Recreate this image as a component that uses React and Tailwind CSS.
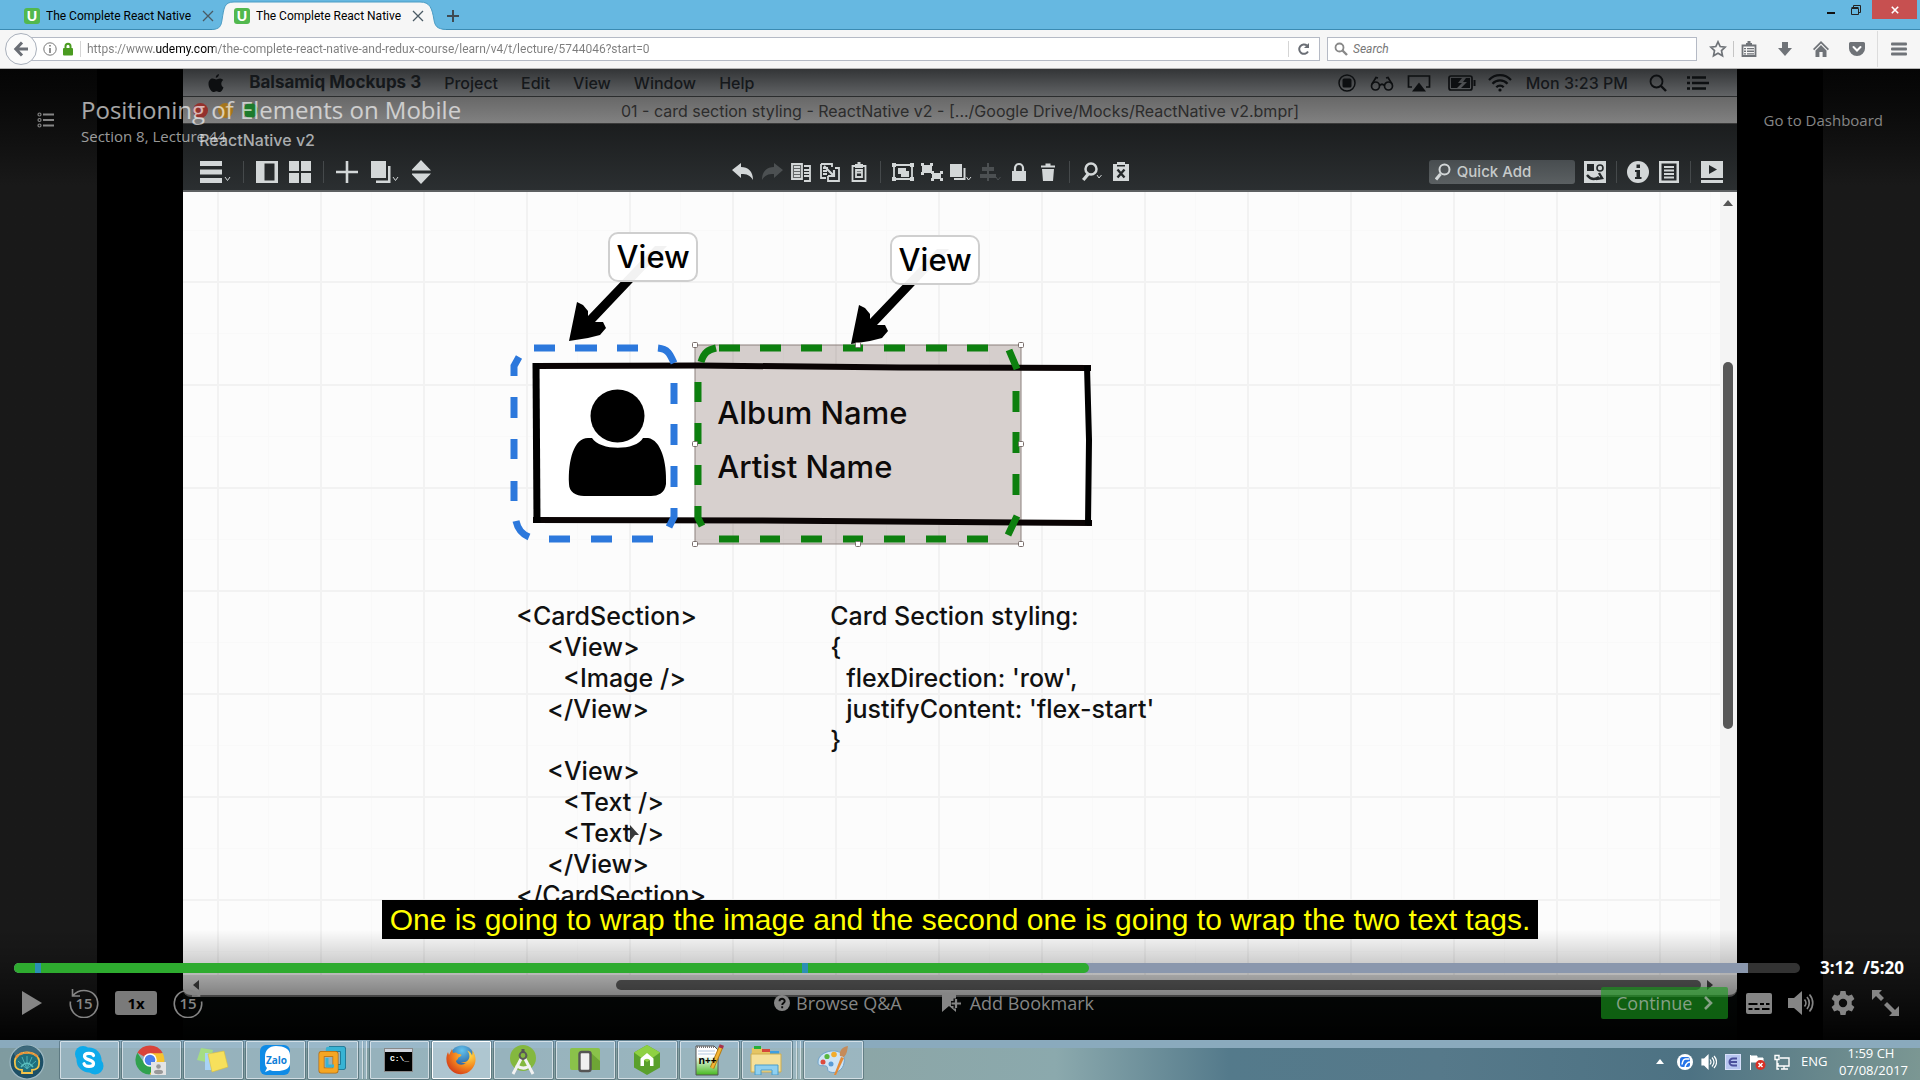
import React from "react";

const UI = "font-['Open_Sans','Noto_Sans',sans-serif]";
const CHROME_UI = "font-['Roboto','Noto_Sans',sans-serif]";

/* ---------- browser chrome ---------- */

function Favicon() {
  return (
    <span className="flex h-4 w-4 shrink-0 items-center justify-center rounded-[3px] bg-[#52b84e] font-['Lato',sans-serif] text-[14px] leading-4 font-black text-white">
      U
    </span>
  );
}

function CloseX() {
  return (
    <svg viewBox="0 0 12 12" className="h-3 w-3" fill="none" stroke="#4a5a64" strokeWidth="1.3">
      <path d="M1 1l10 10M11 1L1 11" />
    </svg>
  );
}

function TabStrip() {
  return (
    <div className={`flex h-[30px] shrink-0 items-stretch border-b border-[#3b8bb3] bg-[#66b8e1] ${CHROME_UI} text-[12px] text-black`}>
      <div className="flex w-[222px] items-center pt-[2px] pl-6">
        <Favicon />
        <span className="ml-[6px] w-[150px] overflow-hidden whitespace-nowrap">The Complete React Native</span>
        <button aria-label="Close tab" className="ml-[6px]">
          <CloseX />
        </button>
      </div>
      <div className="relative -mb-px w-[220px]">
        <svg viewBox="0 0 234 30" className="absolute top-0 -left-[10px] h-[30px] w-[234px]">
          <path d="M0 30C8 29 9 26 10 20C12 8 12 2 22 2H208C218 2 220 8 222 20C223 26 225 29 234 30Z" fill="#f6f6f6" />
          <path d="M0 29.500C8 29 9 26 10 20C12 8 12 2 22 2H208C218 2 220 8 222 20C223 26 225 29 234 29.500" fill="none" stroke="#4b9cc4" />
        </svg>
        <div className="relative flex h-full items-center pt-[2px] pl-3">
          <Favicon />
          <span className="ml-[6px] w-[150px] overflow-hidden whitespace-nowrap">The Complete React Native</span>
          <button aria-label="Close tab" className="ml-[6px]">
            <CloseX />
          </button>
        </div>
      </div>
      <button aria-label="New tab" className="ml-[3px] flex w-4 items-center justify-center pt-[2px]">
        <svg viewBox="0 0 12 12" className="h-3 w-3" stroke="#3f4b52" strokeWidth="2">
          <path d="M6 0v12M0 6h12" />
        </svg>
      </button>
      <div className="ml-auto flex items-start pr-[3px]">
        <button aria-label="Minimize" className="flex h-[19px] w-[26px] items-center justify-center">
          <svg viewBox="0 0 12 12" className="h-3 w-3"><path d="M1 8h8v2H1z" fill="#111" /></svg>
        </button>
        <button aria-label="Restore" className="flex h-[19px] w-[27px] items-center justify-start pl-[5px]">
          <svg viewBox="0 0 12 12" className="h-3 w-3" fill="none" stroke="#222">
            <path d="M1.500 4.500h7v6h-7zM1.500 3.500h7M3.500 3v-1.500h7v7h-2" />
          </svg>
        </button>
        <button aria-label="Close" className="flex h-[19px] w-[45px] items-center justify-center bg-[#c75050]">
          <svg viewBox="0 0 10 10" className="h-2 w-2" stroke="#fff" strokeWidth="2">
            <path d="M1 1l8 8M9 1L1 9" />
          </svg>
        </button>
      </div>
    </div>
  );
}

function NavBar() {
  return (
    <div className={`flex h-[39px] shrink-0 items-center border-b border-[#b5b5b5] bg-[#f6f6f6] pr-[13px] pl-[5px] ${CHROME_UI} text-[12px] text-[#75797e]`}>
      <button aria-label="Back" className="relative z-10 flex h-8 w-8 shrink-0 items-center justify-center rounded-full border border-[#a9b0bb] bg-[#fbfbfb]">
        <svg viewBox="0 0 16 16" className="h-4 w-4" fill="none" stroke="#6a6e75" strokeWidth="3">
          <path d="M9 1.500L2.800 8L9 14.500M3 8h12" />
        </svg>
      </button>
      <div className="-ml-2 flex h-6 flex-1 items-center border border-[#b5bac5] bg-white pr-2 pl-[13px]">
        <svg viewBox="0 0 14 14" className="h-[14px] w-[14px] shrink-0" fill="none" stroke="#777">
          <circle cx="7" cy="7" r="6.200" />
          <path d="M7 6v5M7 3v1.600" strokeWidth="1.600" />
        </svg>
        <svg viewBox="0 0 12 14" className="ml-[5px] h-[14px] w-3 shrink-0">
          <path d="M3.500 7V4.200a2.500 2.500 0 0 1 5 0V7" fill="none" stroke="#4a9b20" strokeWidth="2" />
          <rect x="1" y="6" width="10" height="7.500" rx="1" fill="#4a9b20" />
        </svg>
        <span className="ml-[6px] h-4 w-px bg-[#d5d5d5]" />
        <input
          aria-label="Address"
          defaultValue="https://www.udemy.com/the-complete-react-native-and-redux-course/learn/v4/t/lecture/5744046?start=0"
          className="ml-[6px] min-w-0 flex-1 bg-[linear-gradient(90deg,#7d7d7d_67px,#000_67px,#000_128px,#7d7d7d_128px)] bg-clip-text text-transparent outline-none"
        />
        <span className="mr-2 h-4 w-px bg-[#d5d5d5]" />
        <button aria-label="Reload">
          <svg viewBox="0 0 14 14" className="h-[14px] w-[14px]" fill="none" stroke="#6a6e75" strokeWidth="2">
            <path d="M11 9.500A4.700 4.700 0 1 1 10 3.600" />
            <path d="M12 1v5H7z" fill="#6a6e75" stroke="none" />
          </svg>
        </button>
      </div>
      <label className="ml-[7px] flex h-6 w-[370px] items-center border border-[#b5bac5] bg-white pl-[6px]">
        <svg viewBox="0 0 14 14" className="h-[14px] w-[14px] shrink-0" fill="none" stroke="#888" strokeWidth="1.800">
          <circle cx="5.500" cy="5.500" r="4" />
          <path d="M8.500 8.500l4.500 4.500" strokeWidth="2.400" />
        </svg>
        <input aria-label="Search" placeholder="Search" className="ml-[5px] min-w-0 flex-1 italic outline-none placeholder:text-[#777]" />
      </label>
      <div className="ml-3 flex items-center text-[#6f7378]">
        <button aria-label="Bookmark" className="w-[18px]">
          <svg viewBox="0 0 18 18" className="h-[18px] w-[18px]" fill="none" stroke="currentColor" strokeWidth="1.700">
            <path d="M9 1.800l2.200 4.700 5 .6-3.700 3.500 1 5.200L9 13.200l-4.500 2.600 1-5.200L1.800 7.100l5-.6z" />
          </svg>
        </button>
        <span className="mx-[6px] h-4 w-px bg-[#c5c5c5]" />
        <button aria-label="Library" className="ml-px w-4">
          <svg viewBox="0 0 16 16" className="h-4 w-4">
            <path d="M1.500 4.500h13v10.500h-13z" fill="none" stroke="currentColor" strokeWidth="1.800" />
            <path d="M5 4V2h1.500V0h3v2H11v2zM3 7h2v1.300H3zM6 7h7v1.300H6zM3 9.600h2V11H3zM6 9.600h7V11H6zM3 12.200h2v1.200H3zM6 12.200h7v1.200H6z" fill="currentColor" />
          </svg>
        </button>
        <button aria-label="Downloads" className="ml-5 w-4">
          <svg viewBox="0 0 16 16" className="h-4 w-4" fill="currentColor"><path d="M5 1h6v6h4l-7 8-7-8h4z" /></svg>
        </button>
        <button aria-label="Home" className="ml-5 w-4">
          <svg viewBox="0 0 16 16" className="h-4 w-4" fill="currentColor">
            <path d="M8 0l8 8-1.200 1.200L8 2.500 1.200 9.200 0 8z" />
            <path d="M8 4l5.500 5.500V16H9.600v-5H6.400v5H2.500V9.500z" />
          </svg>
        </button>
        <button aria-label="Pocket" className="ml-5 w-4">
          <svg viewBox="0 0 16 16" className="h-4 w-4">
            <path d="M1.500 1h13A1.500 1.500 0 0 1 16 2.500V7.500a8 7.500 0 0 1-16 0V2.500A1.500 1.500 0 0 1 1.500 1z" fill="currentColor" />
            <path d="M4.500 6L8 9.500 11.500 6" fill="none" stroke="#fff" strokeWidth="2" strokeLinecap="round" />
          </svg>
        </button>
        <span className="ml-3 h-9 w-px bg-[#dcdcdc]" />
        <button aria-label="Menu" className="ml-[13px] w-4">
          <svg viewBox="0 0 16 16" className="h-4 w-4" fill="currentColor">
            <rect y="1.500" width="16" height="3" rx="1" /><rect y="6.500" width="16" height="3" rx="1" /><rect y="11.500" width="16" height="3" rx="1" />
          </svg>
        </button>
      </div>
    </div>
  );
}

/* ---------- Mac desktop inside the video ---------- */

function MacMenuBar() {
  return (
    <div className="flex h-7 shrink-0 items-center border-b border-[#2b2d2e] bg-linear-to-b from-[#333537] to-[#626466] pr-7 pl-[25px] text-[16px] leading-none font-medium text-[#15181b]">
      <svg viewBox="0 0 16 18" className="h-[18px] w-4" fill="#0d0f11">
        <path d="M11 0c.1 2-1.400 3.700-3.200 3.700C7.600 2 9.200.2 11 0zM15.500 13.500c-1 2.600-2.300 4.500-3.800 4.500-1.300 0-1.700-.8-3.200-.8s-2 .8-3.200.8C3.200 18 .5 13.600.5 9.800c0-3.300 2-5.300 4.200-5.300 1.500 0 2.600.9 3.600.9s2.200-1 4-.9c1.200.1 2.300.6 3 1.600-2.900 1.800-2.400 6 .2 7.400z" />
      </svg>
      <nav className="ml-[25px] flex items-center gap-[23px]">
        <span className="text-[17px] font-bold">Balsamiq Mockups 3</span>
        <span>Project</span>
        <span>Edit</span>
        <span>View</span>
        <span>Window</span>
        <span>Help</span>
      </nav>
      <div className="ml-auto flex items-center">
        <svg viewBox="0 0 18 18" className="w-[18px]"><circle cx="9" cy="9" r="8" fill="none" stroke="#0d0f11" strokeWidth="1.500" /><rect x="4.500" y="4.500" width="9" height="9" rx="1.500" fill="#0d0f11" /></svg>
        <svg viewBox="0 0 24 16" className="ml-[14px] w-6" fill="none" stroke="#0d0f11" strokeWidth="1.700">
          <circle cx="5.500" cy="11" r="4" /><circle cx="18.500" cy="11" r="4" /><path d="M9.500 10.500c1.500-1.500 3.500-1.500 5 0M2 9L6 2.500 8 3M22 9l-4-6.500-2 .5" />
        </svg>
        <svg viewBox="0 0 24 18" className="ml-[13px] w-6" fill="none" stroke="#0d0f11" strokeWidth="1.700"><path d="M5 13H1.500V2h21v11H19" /><path d="M12 8.500l7 9H5z" fill="#0d0f11" stroke="none" /></svg>
        <svg viewBox="0 0 28 16" className="ml-[17px] w-7" fill="none" stroke="#0d0f11" strokeWidth="1.700">
          <rect x="1" y="1" width="23" height="14" rx="2" /><path d="M26.500 5v6" strokeWidth="2" /><path d="M3 3h11l-4 5h4l-5 5H3zM22 13h-9l6-6h-4l3-4h4z" fill="#0d0f11" stroke="none" />
        </svg>
        <svg viewBox="0 0 24 18" className="ml-3 w-6" fill="none" stroke="#0d0f11" strokeWidth="2.200"><path d="M1 6a15 15 0 0 1 22 0M4.500 9.800a10 10 0 0 1 15 0M8.300 13.300a5 5 0 0 1 7.400 0" /><circle cx="12" cy="16" r="1.600" fill="#0d0f11" stroke="none" /></svg>
        <span className="ml-[14px]">Mon 3:23 PM</span>
        <svg viewBox="0 0 18 18" className="ml-[21px] w-[18px]" fill="none" stroke="#0d0f11" strokeWidth="1.800"><circle cx="7.500" cy="7.500" r="6" /><path d="M12 12l5 5" strokeWidth="2.400" /></svg>
        <svg viewBox="0 0 22 16" className="ml-5 w-[22px]" stroke="#0d0f11" strokeWidth="2.400"><path d="M5 2.500h14M5 8h17M5 13.500h14M0 2.500h3M0 8h3M0 13.500h3" /></svg>
      </div>
    </div>
  );
}

function WindowTitle() {
  return (
    <div className="relative flex h-[27px] shrink-0 items-center justify-center border-b border-[#3a3a3a] bg-linear-to-b from-[#686868] to-[#818181] pt-px text-[16px] text-[#2c2c2c]">
      <div className="absolute left-[10px] flex gap-[10px]">
        <span className="h-[15px] w-[15px] rounded-full bg-[#93312d]" />
        <span className="h-[15px] w-[15px] rounded-full bg-[#a5761d]" />
        <span className="h-[15px] w-[15px] rounded-full bg-[#1e7a2c]" />
      </div>
      <span>01 - card section styling - ReactNative v2 - [.../Google Drive/Mocks/ReactNative v2.bmpr]</span>
    </div>
  );
}

function Tool({ label, children, wide, dim }) {
  return (
    <button aria-label={label} className={`${wide ? "w-8" : "w-[22px]"} ${dim ? "text-[#4c5052]" : "text-[#d3d7d8]"} shrink-0`}>
      <svg viewBox={wide ? "0 0 32 24" : "0 0 22 24"} className={wide ? "h-6 w-8" : "h-6 w-[22px]"} fill="currentColor">
        {children}
      </svg>
    </button>
  );
}

function Divider({ wide }) {
  return (
    <span className={`flex h-[22px] shrink-0 justify-center ${wide ? "w-2" : "w-[3px]"}`}>
      <span className="w-px bg-[#45494b]" />
    </span>
  );
}

function Toolbar() {
  const line = { fill: "none", stroke: "currentColor" };
  return (
    <div className="flex h-[68px] shrink-0 flex-col border-b-2 border-[#5d6062] bg-linear-to-b from-[#1b1d1e] to-[#2b2f31] pr-[14px] pl-4">
      <div className="mt-1 h-6 text-[16px] leading-6 font-medium text-[#a9acae]">ReactNative v2</div>
      <div className="mt-2 flex items-center justify-between">
        <div className="flex items-center gap-[11px]">
          <Tool label="Menu" wide>
            <path d="M1 1h22v5H1zM1 9.500h22v5H1zM1 18h22v5H1z" />
            <path d="M26 17l2.500 3.500L31 17" {...line} />
          </Tool>
          <Divider />
          <Tool label="Panels"><path d="M0 1h22v22H0zM8.500 3.500v17h10v-17z" fillRule="evenodd" /></Tool>
          <Tool label="Thumbnails"><path d="M0 1h10v10H0zM12 1h10v10H12zM0 13h10v10H0zM12 13h10v10H12z" /></Tool>
          <Divider />
          <Tool label="Add"><path d="M9.700 1h2.600v22H9.700zM0 10.700h22v2.600H0z" /></Tool>
          <Tool label="Duplicate" wide>
            <path d="M2 1h15v17H2z" /><path d="M19 6h2.500v17H7v-2.500h12z" /><path d="M24 17l2.500 3.500L29 17" {...line} />
          </Tool>
          <Tool label="Order"><path d="M9 0l10 10.500H-1zM-1 13.500h20L9 24z" /></Tool>
        </div>
        <div className="flex items-center gap-[7px]">
          <Tool label="Undo"><path d="M0 10l9-7v4c7 0 12 4 12 13-3-5-6-6-12-6v4z" /></Tool>
          <Tool label="Redo" dim><path d="M22 10l-9-7v4C6 7 1 11 1 20c3-5 6-6 12-6v4z" /></Tool>
          <Tool label="Copy"><path d="M1 3h11v17H1z" opacity=".35" /><g {...line} strokeWidth="1.800"><path d="M2 4h10v15H2zM14 6h6v15h-6M4 7h6M4 10h6M4 13h6M4 16h6M14 10h6M14 13h6M14 16h6" /></g></Tool>
          <Tool label="Paste"><g {...line} strokeWidth="1.800"><path d="M2 4h11v3M2 4v14h5M4 8h5M4 11h4M4 14h4" /><path d="M16 8h4v13H9v-5" /><path d="M5 6l10 10M15 10v6H9" strokeWidth="2.200" /></g></Tool>
          <Tool label="Clipboard"><g {...line} strokeWidth="1.800"><path d="M4.500 6h13v15h-13zM8 10h6v7H8zM8 12.500h6" /></g><path d="M7 4h2.500V2h3v2H15v4H7z" /></Tool>
          <Divider wide />
          <Tool label="Group"><g {...line} strokeWidth="1.800"><path d="M2 5h18v14H2z" /></g><path d="M0 3h4v4H0zM18 3h4v4h-4zM0 17h4v4H0zM18 17h4v4h-4zM6 8h8v3h3v6H9v-3H6z" /></Tool>
          <Tool label="Ungroup"><path d="M1 5h10v8H1zM11 13h9v6h-9z" /><path d="M0 3h3v3H0zM9 3h3v3H9zM0 12h3v3H0zM10 11h3v3h-3zM19 11h3v3h-3zM10 18h3v3h-3zM19 18h3v3h-3z" /></Tool>
          <Tool label="Layering"><path d="M0 4h12v13H0z" /><path d="M13.500 8h2v12H4v-2h9.500z" /><path d="M16.500 17l2 3 2.500-3" {...line} /></Tool>
          <Tool label="Align" dim><path d="M3 7h12v4H3zM1 14h16v4H1zM8 3h2v18H8z" /><path d="M17 17l2 3 2.500-3" {...line} /></Tool>
          <Tool label="Lock"><path d="M4 11h14v10H4z" /><path d="M7 12V8a4 4 0 0 1 8 0v4" {...line} strokeWidth="2.200" /></Tool>
          <Tool label="Delete"><path d="M5 9h12l-1 12H6zM4 5.500h14v2H4zM8.500 3.500h5v2h-5z" /></Tool>
          <Divider wide />
          <Tool label="Zoom"><circle cx="10" cy="9" r="5.500" {...line} strokeWidth="2.500" /><path d="M1 19l5-6 2.500 2-5 6z" /><path d="M16 15l2 3 2.500-3" {...line} /></Tool>
          <Tool label="Markup"><path d="M3 4h4V2h8v2h4v17H3z" /><path d="M7.500 9.500l7 8M14.500 9.500l-7 8" fill="none" stroke="#24282a" strokeWidth="2.400" /><path d="M7 5h8v1.500H7z" fill="#24282a" /></Tool>
        </div>
        <div className="flex items-center gap-[9px]">
          <label className="flex h-6 w-[146px] items-center rounded-[3px] bg-linear-to-b from-[#484d50] to-[#5b6062] pl-[6px] text-[#d3d7d8]">
            <svg viewBox="0 0 16 18" className="h-[18px] w-4" fill="none" stroke="currentColor" strokeWidth="2"><circle cx="9.500" cy="6.500" r="5" /><path d="M5.500 11L1 16.500" strokeWidth="3" /></svg>
            <input aria-label="Quick Add" placeholder="Quick Add" className="ml-[6px] w-[110px] text-[15px] font-medium outline-none placeholder:text-[#c6caca]" />
          </label>
          <Tool label="UI Library"><path d="M0 1h22v22H0z" /><path d="M3 4h7v7H3z" fill="#24282a" /><circle cx="16" cy="8" r="3" fill="none" stroke="#24282a" strokeWidth="1.600" /><path d="M3 15c4 5 8 5 12 2M15 13l3 5-6 1" fill="none" stroke="#24282a" strokeWidth="2.400" /></Tool>
          <Divider />
          <Tool label="Inspector"><circle cx="11" cy="12" r="11" /><path d="M9.500 4.500h3.500V8H9.500zM8 10h5v7h1.500v2H8v-2h1.500v-5H8z" fill="#24282a" /></Tool>
          <Tool label="Notes"><path d="M1 1h20v22H1zM3.500 3.500v17h15v-17z" fillRule="evenodd" /><path d="M6 6h10v2H6zM6 9.500h10v2H6zM6 13h10v2H6zM6 16.500h10v2H6z" /></Tool>
          <Divider />
          <Tool label="Present"><path d="M0 1h22v17H0zM0 20h22v3H0z" /><path d="M8 5l8 4.500L8 14z" fill="#24282a" /></Tool>
        </div>
      </div>
    </div>
  );
}

const ARROW = "M569 341L577 302L583 305L588 311L588 316L655 246L667 246L595 322L603 322L606 328L600 335L588 338Z";
const HANDLES = [[695, 345], [858, 345], [1021, 345], [695, 444], [1021, 444], [695, 544], [858, 544], [1021, 544]];

function Diagram() {
  return (
    <svg viewBox="183 192 1554 783" className="absolute top-0 left-0 h-[783px] w-[1554px]" fill="none">
      <path d="M533 363L1091 365L1092 525L533 523Z" fill="#fff" />
      <path d={ARROW} fill="#000" />
      <path d={ARROW} fill="#000" transform="translate(282 3)" />
      <rect x="695" y="345" width="326" height="199" fill="rgb(110 85 80 / 0.28)" stroke="#8b807d" />
      <path d="M569 484C568 460 574 438 588 438H592C600 451 636 451 643 438H648C661 440 667 462 666 484C665 493 658 496 651 496H584C576 496 569 492 569 484Z" fill="#000" />
      <ellipse cx="617.500" cy="416" rx="27" ry="26.500" fill="#000" />
      <path d="M534 366L700 365.500L900 367.500L1091 368" stroke="#0a0404" strokeWidth="6" />
      <path d="M533 520L760 520.500L1092 523" stroke="#0a0404" strokeWidth="6" />
      <path d="M536 363L537 523" stroke="#000" strokeWidth="7" />
      <path d="M1087 366L1089 440L1088 525" stroke="#000" strokeWidth="6" />
      <g stroke="#2c78dc" strokeWidth="7">
        <path d="M534 348h21M575 348h22M617 348h21M549 539h21M591 539h21M632 539h21M514 397v21M514 439v20M514 481v20M674 383v21M674 424v21M674 466v21" />
        <path d="M519 357L514 366V376M658 348C668 349 670 354 674 363M516 521C518 530 522 534 529 537M674 508V517L669 527" />
      </g>
      <g stroke="#0d800f" strokeWidth="7">
        <path d="M719 348h21M760 348h21M801 348h21M843 348h20M884 348h21M926 348h21M967 348h21M719 539h20M760 539h20M801 539h21M843 539h20M884 539h21M926 539h20M967 539h21" />
        <path d="M698 382v20M698 423v21M698 465v20M1016 391v21M1016 432v21M1016 474v21" />
        <path d="M701 362C704 352 708 350 716 348M1009 350L1017 369M1017 516L1008 535M698 506V518L702 526" />
      </g>
      {HANDLES.map(([x, y]) => (
        <rect key={`${x}-${y}`} x={x - 2.500} y={y - 2.500} width="5" height="5" rx="1" fill="#fff" stroke="#7a6f6c" />
      ))}
      <path d="M630 825l9 10-4 0-5 6z" fill="#3a3a3a" />
    </svg>
  );
}

const JSX_LINES = [
  [0, "<CardSection>"], [1, "<View>"], [2, "<Image />"], [1, "</View>"], [0, "\u00a0"],
  [1, "<View>"], [2, "<Text />"], [2, "<Text />"], [1, "</View>"], [0, "</CardSection>"],
];
const INDENT = ["pl-0", "pl-[31px]", "pl-[47px]"];

function Canvas() {
  return (
    <div className="relative min-h-0 flex-1 overflow-hidden bg-[#fcfcfc] bg-[linear-gradient(90deg,#f2f2f2_2px,transparent_2px),linear-gradient(#f2f2f2_2px,transparent_2px),linear-gradient(90deg,#f9f9f9_1px,transparent_1px),linear-gradient(#f9f9f9_1px,transparent_1px)] bg-[size:103px_103px,103px_103px,103px_103px,103px_103px] bg-[position:34px_0,0_89px,85px_0,0_38px] font-medium text-[#111]">
      <Diagram />
      <div className="absolute top-10 left-[425px] flex h-[50px] w-[90px] items-center justify-center rounded-[10px] border-2 border-[#cfcfcf] bg-white/95 text-[31px] text-black">View</div>
      <div className="absolute top-[43px] left-[707px] flex h-[50px] w-[90px] items-center justify-center rounded-[10px] border-2 border-[#cfcfcf] bg-white/95 text-[31px] text-black">View</div>
      <div className="absolute top-[194px] left-[534px] text-[31px] leading-[54px] whitespace-nowrap text-[#0d0a09]">
        <p>Album Name</p>
        <p>Artist Name</p>
      </div>
      <div className="absolute top-[409px] left-[333px] text-[25px] leading-[31px] whitespace-nowrap">
        {JSX_LINES.map(([level, text], i) => (
          <p key={i} className={INDENT[level]}>{text}</p>
        ))}
      </div>
      <div className="absolute top-[409px] left-[647px] text-[25px] leading-[31px] whitespace-nowrap">
        <p>Card Section styling:</p>
        <p>{"{"}</p>
        <p className="pl-4">flexDirection: 'row',</p>
        <p className="pl-4">justifyContent: 'flex-start'</p>
        <p>{"}"}</p>
      </div>
      <div className="absolute inset-y-0 right-0 flex w-[17px] flex-col items-center bg-[#f4f4f4] pt-2">
        <svg viewBox="0 0 10 6" className="h-[6px] w-[10px] shrink-0"><path d="M5 0l5 6H0z" fill="#555" /></svg>
        <span className="mt-[156px] h-[367px] w-[10px] shrink-0 rounded-full bg-[#575757]" />
        <svg viewBox="0 0 10 6" className="mt-auto mb-1 h-[6px] w-[10px] shrink-0"><path d="M0 0h10L5 6z" fill="#777" /></svg>
      </div>
    </div>
  );
}

function MacScreen() {
  return (
    <div className="flex aspect-[16/10] h-full flex-col bg-[#060a09] pb-[43px] font-['Inter',sans-serif]">
      <MacMenuBar />
      <WindowTitle />
      <Toolbar />
      <Canvas />
      <div className="flex h-[22px] shrink-0 items-center rounded-b-lg border-b-2 border-[#777] bg-[#e2e2e2] pr-6 pl-[10px]">
        <svg viewBox="0 0 6 10" className="h-[10px] w-[6px]"><path d="M6 0v10L0 5z" fill="#444" /></svg>
        <span className="ml-auto h-[10px] w-[71.4%] rounded-full bg-[#626262]" />
        <svg viewBox="0 0 6 10" className="ml-[6px] h-[10px] w-[6px]"><path d="M0 0v10l6-5z" fill="#444" /></svg>
      </div>
    </div>
  );
}

/* ---------- player overlay ---------- */

function Skip({ forward }) {
  return (
    <button aria-label={forward ? "Forward 15 seconds" : "Rewind 15 seconds"} className="relative flex h-[30px] w-[30px] items-center justify-center text-[15px] font-semibold">
      <svg viewBox="0 0 30 30" className={forward ? "absolute inset-0 -scale-x-100" : "absolute inset-0"} fill="none" stroke="currentColor" strokeWidth="1.600">
        <path d="M1.500 13.500A13.700 13.700 0 1 0 28.500 13.500C28 8 23 2.500 15 2.500C10 2.500 6.500 4.500 4 7.500M3.500 1v7h7.500" />
      </svg>
      <span>15</span>
    </button>
  );
}

function PlayerOverlay() {
  return (
    <div className={`absolute inset-0 flex flex-col ${UI} text-[#858585]`}>
      <div className="flex items-start pt-[25px] pr-[37px] pl-[37px]">
        <button aria-label="Course contents" className="mt-[18px]">
          <svg viewBox="0 0 18 16" className="h-4 w-[18px]" stroke="currentColor" strokeWidth="2">
            <path d="M6 2.500h11M6 8h11M6 13.500h11" />
            <g fill="#111" strokeWidth="1.200"><circle cx="2.500" cy="2.500" r="1.500" /><circle cx="2.500" cy="8" r="1.500" /><circle cx="2.500" cy="13.500" r="1.500" /></g>
          </svg>
        </button>
        <div className="ml-[26px]">
          <h1 className="text-[24px] leading-8 text-white/65">Positioning of Elements on Mobile</h1>
          <p className="text-[15px] leading-5 text-white/60">Section 8, Lecture 44</p>
        </div>
        <a href="#dashboard" className="mt-[14px] ml-auto text-[15px] leading-6">Go to Dashboard</a>
      </div>

      <div className="mt-auto flex justify-center">
        <p className="bg-black px-2 font-['Liberation_Sans',sans-serif] text-[30px] leading-[39px] whitespace-nowrap text-[#ffff00]">
          One is going to wrap the image and the second one is going to wrap the two text tags.
        </p>
      </div>

      <div className="mt-[11px] flex items-center pr-4 pl-[14px]">
        <div className="relative mt-[10px] h-[10px] flex-1 overflow-hidden rounded-full bg-[#333]">
          <span className="absolute inset-y-0 left-0 w-[97.1%] bg-[#8f9db4]/95" />
          <span className="absolute inset-y-0 left-0 w-[60.2%] rounded-r-full bg-[#2eab2f]" />
          <span className="absolute inset-y-0 left-[1.2%] w-[6px] bg-[#2b8fb5]" />
          <span className="absolute inset-y-0 left-[44.1%] w-[6px] bg-[#2b8fb5]" />
        </div>
        <div className="mt-[10px] ml-5 flex w-[84px] justify-between text-[17px] leading-4 font-bold text-white">
          <span>3:12</span>
          <span>/5:20</span>
        </div>
      </div>

      <div className="mt-[11px] mb-[21px] flex h-[32px] items-center justify-between pr-[21px] pl-[22px]">
        <div className="flex items-center">
          <button aria-label="Play">
            <svg viewBox="0 0 20 24" className="h-6 w-5" fill="currentColor"><path d="M0 0l20 12L0 24z" /></svg>
          </button>
          <div className="ml-[27px]"><Skip /></div>
          <button className="mx-4 h-6 w-[42px] rounded-[3px] bg-[#7a7a7a] text-[15px] font-bold text-black">1x</button>
          <Skip forward />
        </div>
        <div className="flex items-center pl-[64px] text-[18px] leading-6">
          <button className="flex items-center gap-[6px]">
            <svg viewBox="0 0 16 16" className="h-4 w-4"><circle cx="8" cy="8" r="8" fill="currentColor" /><path d="M5.500 6.300C5.500 3 10.700 3 10.700 6.200 10.700 8 8.200 8 8.200 10M8.200 11.300v2" fill="none" stroke="#0a0a0a" strokeWidth="1.900" /></svg>
            Browse Q&amp;A
          </button>
          <button className="ml-10 flex items-center gap-[9px]">
            <svg viewBox="0 0 19 18" className="h-[18px] w-[19px]"><path d="M0 0h14v18l-7-6-7 6z" fill="currentColor" /><path d="M14 4.500v10M9 9.500h10" stroke="#0a0a0a" strokeWidth="5" /><path d="M14 5v9M9.500 9.500H19" stroke="currentColor" strokeWidth="2.200" /></svg>
            Add Bookmark
          </button>
        </div>
        <div className="flex items-center">
          <button className="flex h-8 w-[127px] items-center justify-between rounded-[2px] bg-[#179c1b]/60 px-[15px] text-[18px] text-[#85a085]">
            Continue
            <svg viewBox="0 0 10 14" className="h-[14px] w-[10px]" fill="none" stroke="currentColor" strokeWidth="2.600"><path d="M2 1l6 6-6 6" /></svg>
          </button>
          <button aria-label="Captions" className="ml-[18px]">
            <svg viewBox="0 0 26 21" className="w-[26px]"><rect width="26" height="21" rx="2" fill="currentColor" /><path d="M2.500 11h9M14 11h4M20 11h3.500M2.500 16h4M8.500 16h5M16 16h7.500" stroke="#000" strokeWidth="2.200" /></svg>
          </button>
          <button aria-label="Volume" className="ml-4">
            <svg viewBox="0 0 26 24" className="w-[26px]" fill="none" stroke="currentColor" strokeWidth="1.700"><path d="M0 7h6L14 0v24l-8-7H0z" fill="currentColor" stroke="none" /><path d="M16.500 8.500c1.800 2 1.800 5 0 7M19 6c3 3.500 3 8.500 0 12M21.500 3.500c4.300 5 4.300 12 0 17" /></svg>
          </button>
          <button aria-label="Settings" className="ml-[17px]">
            <svg viewBox="0 0 24 24" className="w-6"><path d="M9.500 0h5l.7 3.500 2.300 1.300 3.400-1.200 2.500 4.300-2.700 2.400v3.400l2.700 2.400-2.500 4.300-3.400-1.200-2.300 1.300-.7 3.500h-5l-.7-3.500-2.300-1.300-3.400 1.200L.6 16.100l2.700-2.400v-3.400L.6 7.900l2.500-4.300 3.400 1.200 2.300-1.300zM12 7.800a4.200 4.200 0 1 0 0 8.400 4.200 4.200 0 0 0 0-8.400z" fill="currentColor" fillRule="evenodd" /></svg>
          </button>
          <button aria-label="Fullscreen" className="ml-[17px]">
            <svg viewBox="0 0 27 26" className="w-[27px]"><path d="M0 0h10L7 3l5 5-3 3-5-5-4 4zM27 26H17l3-3-8-8 3-3 8 8 4-4z" fill="currentColor" /><path d="M8.500 15.500l10-8" stroke="#111" strokeWidth="2" /></svg>
          </button>
        </div>
      </div>
    </div>
  );
}

function Player() {
  return (
    <main className="relative flex min-h-0 flex-1 justify-center overflow-hidden bg-linear-to-b from-[#050505] via-[#191919] via-12% to-[#191919]">
      <div className="flex aspect-video h-full justify-center bg-black">
        <MacScreen />
      </div>
      <div className="absolute inset-x-0 bottom-0 h-[120px] bg-[linear-gradient(transparent_8%,rgb(0_0_0/0.18)_35%,rgb(0_0_0/0.42)_62%,rgb(0_0_0/0.9))]" />
      <PlayerOverlay />
    </main>
  );
}

/* ---------- taskbar ---------- */

function Skype() {
  return (
    <svg viewBox="0 0 30 30" className="h-[30px] w-[30px]">
      <circle cx="9" cy="9" r="8" fill="#0eaaea" /><circle cx="21" cy="21" r="8.500" fill="#0eaaea" /><circle cx="15" cy="15" r="12.500" fill="#0eaaea" />
      <path d="M19.500 10.500C18.500 7.500 10.500 7.500 10.500 11.200c0 4.500 9 2.800 9 7.200 0 4-8.500 4-9.500 .3" fill="none" stroke="#fff" strokeWidth="3.200" strokeLinecap="round" />
    </svg>
  );
}
function Chrome() {
  return (
    <svg viewBox="0 0 32 30" className="h-[30px] w-8">
      <path d="M15 15L2.400 7.700A14.500 14.500 0 0 1 27.600 7.700z" fill="#d9443a" />
      <path d="M15 15V8.300h12.800A14.500 14.500 0 0 1 15 29.500z" fill="#f6c32f" />
      <path d="M15 15l6 3.500-6.500 11A14.500 14.500 0 0 1 2.400 7.700l7 10.500z" fill="#30a14e" />
      <circle cx="15" cy="15" r="6.800" fill="#fff" /><circle cx="15" cy="15" r="5.300" fill="#4a80ec" />
      <rect x="16" y="17" width="15" height="13" fill="#e4e4e4" /><circle cx="23.500" cy="21.500" r="2.300" fill="#999" /><ellipse cx="23.500" cy="27" rx="4.500" ry="2.200" fill="#999" />
    </svg>
  );
}
function Notes() {
  return (
    <svg viewBox="0 0 32 26" className="h-[26px] w-8">
      <path d="M4 1l12 2-3 13L0 13z" fill="#a5dd84" /><path d="M8 6h13v17H8z" fill="#a9d3f5" /><path d="M11 7l16-3 4 16-16 5z" fill="#f7e05c" stroke="#d9bf3c" strokeWidth=".6" />
    </svg>
  );
}
function Zalo() {
  return (
    <span className="relative flex h-[30px] w-[30px] items-center justify-center rounded-md bg-[#0f8be6]">
      <svg viewBox="0 0 30 30" className="absolute inset-0"><path d="M16 1C24 1 30 4 30 10v8c0 6-6 8-13 8-3 0-6 0-7-1l-5 2 2-4c-2-2-2-4-2-7v-4C5 5 9 1 16 1z" fill="#fff" /></svg>
      <span className="relative pl-1 text-[10px] leading-none font-bold text-[#0f7fd8]">Zalo</span>
    </span>
  );
}
function Vmware() {
  return (
    <svg viewBox="0 0 30 30" className="h-[30px] w-[30px]" fill="none" strokeLinejoin="round">
      <path d="M12 4h14v18h-5" stroke="#1c6f8c" strokeWidth="6" /><path d="M11 7V4h15v18h-5" stroke="#38b3d4" strokeWidth="4.400" />
      <path d="M4.500 9h14v16.500h-14z" stroke="#b06a10" strokeWidth="6" /><path d="M4.500 9h14v16.500h-14z" stroke="#f5a623" strokeWidth="4.600" />
      <path d="M10 13v8h7" stroke="#38b3d4" strokeWidth="3" />
    </svg>
  );
}
function Terminal() {
  return (
    <span className="flex h-6 w-[29px] flex-col border border-[#888] bg-black font-['Liberation_Mono',monospace] text-[8px] leading-[9px] font-bold text-white">
      <span className="h-[3px] bg-[#cfd3dc]" />
      <span className="pt-[2px] pl-[2px]">C:\_</span>
    </span>
  );
}
function Firefox() {
  return (
    <svg viewBox="0 0 30 30" className="h-[30px] w-[30px]">
      <defs>
        <radialGradient id="ffx" cx=".75" cy=".25" r=".9"><stop offset="0" stopColor="#ffe14d" /><stop offset=".5" stopColor="#f58a1f" /><stop offset="1" stopColor="#cf3317" /></radialGradient>
        <radialGradient id="globe" cx=".5" cy=".2" r=".9"><stop offset="0" stopColor="#62c3ee" /><stop offset="1" stopColor="#12337c" /></radialGradient>
      </defs>
      <circle cx="16" cy="13" r="12.500" fill="url(#globe)" />
      <path d="M26 5c5 6 4.500 14 0 19-5 6-14 7-20 2C0 21-1 13 2 7l1 3 3-6 1 4c2-1 4-.5 5 1 2 0 3 0 3.500 1-.5 1.500-2.500 2-3.500 3 .5 2-2 1.500-2 3.500 2 4 7 4 10 1.500-2 .5-4 0-5-1 4 1 7-1 8-3.500 1.500-4-1-7-2-8 3 .5 4.500 3 5 5 .5-2 .5-4 0-6.500z" fill="url(#ffx)" />
    </svg>
  );
}
function AndroidStudio() {
  return (
    <svg viewBox="0 0 30 30" className="h-[30px] w-[30px]">
      <circle cx="15" cy="13" r="13" fill="#84b83f" /><path d="M14 12L5 29M16 12l9 17M8 20c5 4 10 4 14 0" fill="none" stroke="#f2f2f2" strokeWidth="3" /><circle cx="15" cy="10.500" r="3.400" fill="#84b83f" stroke="#5a5a5a" strokeWidth="2" /><path d="M13.500 4h3v4h-3z" fill="#555" />
    </svg>
  );
}
function Emulator() {
  return (
    <svg viewBox="0 0 30 26" className="h-[26px] w-[30px]"><rect y="1" width="30" height="22" rx="2" fill="#8ac24a" /><path d="M20 5l10 9v9H20z" fill="#6ea535" /><rect x="9.500" y="5" width="11" height="19" rx="2" fill="#f0f0f0" stroke="#555" strokeWidth="2.400" /></svg>
  );
}
function Hexagon() {
  return (
    <svg viewBox="0 0 28 30" className="h-[30px] w-7"><path d="M14 0l13 7.500v15L14 30 1 22.500v-15z" fill="#5aa02c" /><path d="M14 0l13 7.500L14 17 1 7.500z" fill="#8fd143" /><path d="M7.500 21v-7.500L14 8l6.500 5.500V21H17v-5c0-3-6-3-6 0v5z" fill="#fff" /></svg>
  );
}
function NotepadPP() {
  return (
    <span className="relative flex h-8 w-[30px] items-center">
      <svg viewBox="0 0 30 32" className="absolute inset-0">
        <defs><linearGradient id="npp" x1="0" y1="0" x2="0" y2="1"><stop offset=".35" stopColor="#fff" /><stop offset="1" stopColor="#46b81f" /></linearGradient></defs>
        <path d="M2 2h18l4 4v25H2z" fill="url(#npp)" stroke="#555" /><path d="M3 3h17" stroke="#777" strokeWidth="2" strokeDasharray="1 1" />
        <path d="M4 7h17M4 10h17" stroke="#b5c9e0" /><path d="M27 3l-9 21" stroke="#b67d14" strokeWidth="4.500" /><path d="M27 3l-9 21" stroke="#f3b433" strokeWidth="2.600" /><path d="M27.800 1l-1 3" stroke="#a8324a" strokeWidth="4.500" />
      </svg>
      <span className="relative pl-[5px] text-[10px] leading-none font-bold text-black">n++</span>
    </span>
  );
}
function Explorer() {
  return (
    <svg viewBox="0 0 32 30" className="h-[30px] w-8">
      <path d="M2 3h10l2 3h15v21H1z" fill="#e5c563" /><path d="M4 1h7v3H4z" fill="#25b03a" /><path d="M12 4h8v3h-8z" fill="#d5473b" /><path d="M20 6h9v3h-9z" fill="#3f9fe0" /><path d="M1 9h30v18H1z" fill="#f5e09a" stroke="#cfae50" />
      <path d="M5 30V20h23v10h-6v-5H11v5z" fill="#8fd0f0" stroke="#4a9dc9" />
    </svg>
  );
}
function Paint() {
  return (
    <svg viewBox="0 0 32 30" className="h-[30px] w-8">
      <path d="M14 6c9-1 15 4 13 12-1 7-8 11-14 9-4-1-1-5-4-6-4-1-8 1-8-4C1 11 7 7 14 6z" fill="#cfe4f5" stroke="#6fa3cb" /><circle cx="6" cy="17" r="2.500" fill="#dd4a3c" /><circle cx="10" cy="11.500" r="2.600" fill="#57b63e" /><circle cx="17" cy="9.500" r="2.800" fill="#f3ac2d" /><circle cx="14" cy="19" r="2.500" fill="#5b9bd5" />
      <path d="M17 30l7-18 3 1-8 17z" fill="#e58a35" /><path d="M23 11c-1-5 2-9 8-10-1 5-1 8-4 11z" fill="#c58b5a" />
    </svg>
  );
}

const APPS = [
  ["Skype", Skype], ["Chrome", Chrome], ["Sticky Notes", Notes], ["Zalo", Zalo], ["VMware", Vmware, "stack"], ["Command Prompt", Terminal],
  ["Firefox", Firefox, "active"], ["Android Studio", AndroidStudio], ["Emulator", Emulator], ["Genymotion", Hexagon], ["Notepad++", NotepadPP],
  ["Explorer", Explorer, "stack"], ["Paint", Paint],
];

function Taskbar() {
  return (
    <footer className={`flex h-10 shrink-0 items-stretch bg-[linear-gradient(#8aaabd_8px,transparent_8px),linear-gradient(90deg,#7f9ba0,#7f9c9f_20%,#8ca5a5_42%,#8ba9ad_55%,#547a8b_64%,#56798a_75%,#4d7283_88%,#7b9793)] ${UI} text-[13px] text-white`}>
      <button aria-label="Start" className="flex w-[60px] items-center pt-[6px] pl-[9px]">
        <svg viewBox="0 0 36 36" className="h-9 w-9">
          <circle cx="18" cy="17" r="17" fill="#1c4f66" stroke="#9fb9c2" strokeWidth="1.200" /><ellipse cx="18" cy="8" rx="13" ry="7" fill="#fff" opacity=".15" />
          <path d="M13 28v-3C8 25 6 22 6 19c-1-6 3-9 5-10 3-2 11-2 14 0 2 1 6 4 5 10 0 3-2 6-7 6v3z" fill="#1f6f7d" stroke="#f2c34a" strokeWidth="1.800" />
          <path d="M7 13C10 6 26 6 29 13" fill="none" stroke="#e8903a" strokeWidth="2.200" strokeDasharray="4 1" />
          <path d="M18 24L9 16M18 24L13 12M18 24V11M18 24l5-12M18 24l9-8" stroke="#4fb0b4" /><path d="M12 22c4-5 8-5 12 0" stroke="#5cc0c0" strokeWidth="1.500" fill="none" />
        </svg>
      </button>
      <div className="flex gap-[3px] pt-px pb-px">
        {APPS.map(([name, Icon, kind]) => (
          <div key={name} className="flex w-[59px] gap-px">
            <button
              aria-label={name}
              className={`flex flex-1 items-center justify-center rounded-[1px] border pr-[2px] outline-1 outline-[#3c5864]/50 ${kind === "active" ? "border-white bg-[#b9cfdc]/80" : "border-white/55 bg-[#a5c1d0]/60"}`}
            >
              <Icon />
            </button>
            {kind === "stack" && (
              <>
                <span className="w-1 border-r border-white/55 bg-[#a5c1d0]/60" />
                <span className="w-[3px] border-r border-white/55 bg-[#a5c1d0]/60" />
              </>
            )}
          </div>
        ))}
      </div>
      <div className="ml-auto flex items-center pt-[3px] pr-[17px]">
        <svg viewBox="0 0 8 5" className="h-[5px] w-2"><path d="M4 0l4 5H0z" fill="#fff" /></svg>
        <svg viewBox="0 0 16 16" className="ml-[13px] h-4 w-4"><circle cx="8" cy="8" r="8" fill="#fff" /><rect x="3" y="3" width="10" height="10" rx="2.500" fill="#2674e8" /><path d="M12.500 5H8.500C6 5 5.500 7.500 5 10.500M13 8c-3 0-4 1.500-5 5" fill="none" stroke="#fff" strokeWidth="1.500" /></svg>
        <svg viewBox="0 0 16 16" className="ml-2 h-4 w-4" fill="none" stroke="#fff" strokeWidth="1.200"><path d="M1 5h2.500L7 1.500v13L3.500 11H1z" fill="#fff" /><path d="M9 5.500c1.200 1.500 1.200 3.500 0 5M11 3.500c2.400 2.700 2.400 6.300 0 9M13 2c3.200 3.700 3.200 8.300 0 12" /></svg>
        <svg viewBox="0 0 16 16" className="ml-2 h-4 w-4"><rect width="16" height="16" fill="#d7e0fa" /><rect x="1" y="1" width="14" height="14" fill="#b7c5f0" /><path d="M12 4.500H8a3.500 3.500 0 0 0 0 7h4M5 8h7" fill="none" stroke="#4a4f9c" strokeWidth="2" /></svg>
        <svg viewBox="0 0 17 16" className="ml-2 h-4 w-[17px]"><path d="M1.500 1v15M2 2h6v2h6v6H8V8H2z" fill="#fff" stroke="#fff" /><circle cx="11.500" cy="11" r="5" fill="#d93025" /><path d="M9.500 9l4 4M13.500 9l-4 4" stroke="#fff" strokeWidth="1.500" /></svg>
        <svg viewBox="0 0 16 16" className="ml-2 h-4 w-4" fill="none" stroke="#fff" strokeWidth="1.400"><path d="M6 4h9v8H4V9M7 15h7M10 12v3M1 1.500h4v4H1zM3 6v9h2" /></svg>
        <span className="ml-[11px] w-6">ENG</span>
        <div className="ml-[14px] w-16 text-center leading-[17px] whitespace-nowrap">
          <p>1:59 CH</p>
          <p>07/08/2017</p>
        </div>
      </div>
    </footer>
  );
}

export default function App() {
  return (
    <div className="flex h-screen min-h-[700px] flex-col overflow-hidden">
      <TabStrip />
      <NavBar />
      <Player />
      <Taskbar />
    </div>
  );
}
